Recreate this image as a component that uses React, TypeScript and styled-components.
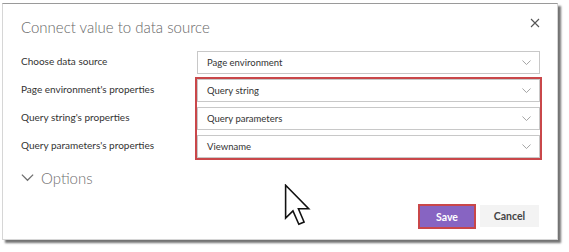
import React from "react";
import styled, { createGlobalStyle } from "styled-components";

const GlobalStyle = createGlobalStyle`
  html, body {
    margin: 0;
    padding: 0;
    background: #ffffff;
  }
  body {
    font-family: Lato, "Open Sans", sans-serif;
    color: #333333;
  }
`;

type FieldProps = {
  value: string;
};

const Chevron = ({ size = 9, color = "#9a9a9a" }: { size?: number; color?: string }) => (
  <svg width={size} height={size / 2 + 1} viewBox="0 0 10 6" fill="none">
    <path d="M0.5 0.5 L5 5 L9.5 0.5" stroke={color} strokeWidth="1" />
  </svg>
);

const Dropdown = (props: FieldProps) => {
  return (
    <DropdownBox>
      <span>{props.value}</span>
      <Chevron />
    </DropdownBox>
  );
};

const App = () => {
  return (
    <>
      <GlobalStyle />
      <Stage>
        <Dialog>
          <Header>
            <Title>Connect value to data source</Title>
            <CloseButton aria-label="Close">
              <svg width="10" height="10" viewBox="0 0 10 10">
                <path d="M1 1 L9 9 M9 1 L1 9" stroke="#555" strokeWidth="1.1" />
              </svg>
            </CloseButton>
          </Header>
          <Form>
            <Label row={1}>Choose data source</Label>
            <Label row={2}>Page environment's properties</Label>
            <Label row={3}>Query string's properties</Label>
            <Label row={4}>Query parameters's properties</Label>
            <FieldCell row={1}>
              <Dropdown value="Page environment" />
            </FieldCell>
            <Highlight>
              <Dropdown value="Query string" />
              <Dropdown value="Query parameters" />
              <Dropdown value="Viewname" />
            </Highlight>
          </Form>
          <Options>
            <Chevron size={13} color="#6f6f6f" />
            <span>Options</span>
          </Options>
          <Footer>
            <SaveButton>Save</SaveButton>
            <CancelButton>Cancel</CancelButton>
          </Footer>
        </Dialog>
        <Cursor width="28" height="42" viewBox="0 0 13 20">
          <path
            d="M0.6 0.6 L0.6 16.2 L4.1 12.8 L6.9 19.2 L9.4 18.1 L6.7 11.8 L11.6 11.8 Z"
            fill="#ffffff"
            stroke="#111111"
            strokeWidth="0.75"
            strokeLinejoin="miter"
          />
        </Cursor>
      </Stage>
    </>
  );
};

export default App;

const Stage = styled.div`
  position: relative;
  width: 569px;
  height: 252px;
  overflow: hidden;
  padding: 3px 0 0 2px;
  box-sizing: border-box;
`;

const Dialog = styled.div`
  width: 556px;
  height: 237px;
  box-sizing: border-box;
  background: #ffffff;
  border: 1px solid #d6d6d6;
  border-top: 1px solid #9a9a9a;
  box-shadow: 3px 3px 2px rgba(0, 0, 0, 0.55);
  padding: 12px 17px 0 18px;
  display: flex;
  flex-direction: column;
`;

const Header = styled.div`
  display: flex;
  justify-content: space-between;
  align-items: flex-start;
  height: 35px;
`;

const Title = styled.h1`
  margin: 0;
  font-size: 15px;
  font-weight: 300;
  color: #666666;
  line-height: 22px;
`;

const CloseButton = styled.button`
  border: none;
  background: transparent;
  padding: 0;
  margin-top: 1px;
  margin-right: -1px;
  width: 12px;
  height: 12px;
  display: flex;
  align-items: center;
  justify-content: center;
`;

const Form = styled.div`
  display: grid;
  grid-template-columns: 176px 343px;
  grid-template-rows: repeat(4, 23px);
  row-gap: 5px;
`;

const Label = styled.div<{ row: number }>`
  grid-column: 1;
  grid-row: ${(p) => p.row};
  font-size: 10px;
  color: #333333;
  display: flex;
  align-items: center;
  padding-bottom: 4px;
`;

const FieldCell = styled.div<{ row: number }>`
  grid-column: 2;
  grid-row: ${(p) => p.row};
`;

const Highlight = styled.div`
  grid-column: 2;
  grid-row: 2 / 5;
  display: flex;
  flex-direction: column;
  gap: 5px;
  outline: 2px solid #c9474a;
  outline-offset: 0px;
`;

const DropdownBox = styled.div`
  height: 23px;
  box-sizing: border-box;
  border: 1px solid #c8c8c8;
  background: #ffffff;
  display: flex;
  align-items: center;
  justify-content: space-between;
  padding: 0 8px 0 9px;
  font-size: 9.5px;
  color: #333333;
`;

const Options = styled.div`
  display: flex;
  align-items: center;
  gap: 7px;
  margin-top: 10px;
  font-size: 15px;
  font-weight: 300;
  color: #6f6f6f;
  height: 20px;
`;

const Footer = styled.div`
  display: flex;
  justify-content: flex-end;
  gap: 6px;
  margin-top: 17px;
  padding-right: 1px;
`;

const SaveButton = styled.button`
  width: 54px;
  height: 21px;
  border: none;
  background: #8764c2;
  outline: 2px solid #c9474a;
  color: #ffffff;
  font-family: Lato, sans-serif;
  font-weight: 700;
  font-size: 10.5px;
  padding: 0;
  margin-top: 1px;
`;

const CancelButton = styled.button`
  width: 59px;
  height: 22px;
  border: none;
  background: #f3f3f3;
  color: #444444;
  font-family: Lato, sans-serif;
  font-weight: 700;
  font-size: 10.5px;
  padding: 0;
`;

const Cursor = styled.svg`
  position: absolute;
  left: 284px;
  top: 184px;
`;
